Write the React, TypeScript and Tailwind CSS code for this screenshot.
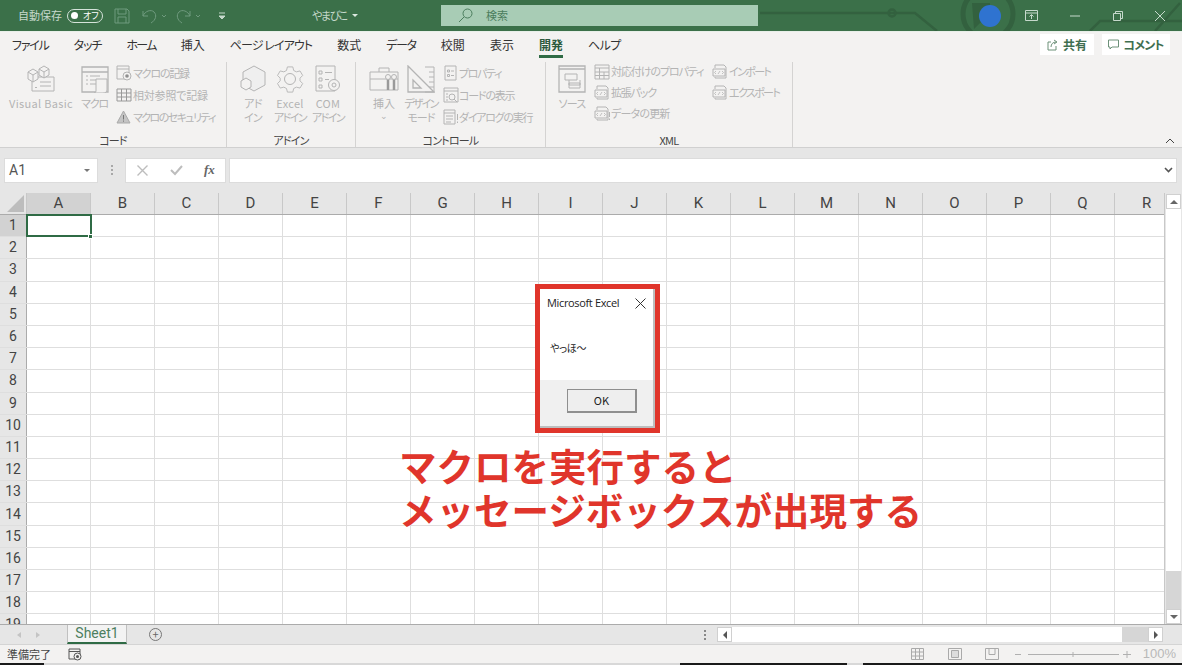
import React from "react";

const C = "#b4b4b4";
const Svg = ({ w, h, children, className = "" }: { w: number; h: number; children: React.ReactNode; className?: string }) => (
  <svg width={w} height={h} viewBox={`0 0 ${w} ${h}`} fill="none" stroke={C} strokeWidth={1} className={`shrink-0 ${className}`}>
    {children}
  </svg>
);

const VBIcon = () => (
  <Svg w={30} h={28}>
    <path d="M6 12h22v14H6z" /><path d="M14 17h11M14 21h11M9 22.5h2" />
    <path d="M2 7l5-3 5 3v7l-5 3-5-3zM2 7l5 3 5-3M7 10v7" fill="#f3f2f1" />
    <path d="M13 4l5-3 5 3v6l-5 3-5-3zM13 4l5 3 5-3M18 7v6" fill="#f3f2f1" />
  </Svg>
);
const MacroIcon = () => (
  <Svg w={28} h={28}>
    <path d="M1 2h26v25H1zM1 7h26" strokeWidth={1.3} />
    <path d="M5 11h2M9 11h10M5 15h2M9 15h10M5 19h2M9 19h6" />
    <path d="M15 14h11v11c0 2-2 3-4 3h-9c2 0 2-2 2-3z" fill="#f3f2f1" />
  </Svg>
);
const RecIcon = () => (
  <Svg w={16} h={16}>
    <path d="M1 1h12v13H1zM1 4h12" /><circle cx={11} cy={11} r={4} fill="#f3f2f1" /><circle cx={11} cy={11} r={1.8} fill="#8f8f8f" stroke="none" />
  </Svg>
);
const TableIcon = () => (
  <Svg w={16} h={14}>
    <path d="M1 1h14v12H1zM1 5h14M1 9h14M5.5 1v12M10.5 1v12" stroke="#999" />
  </Svg>
);
const WarnIcon = () => (
  <Svg w={15} h={14}>
    <path d="M7.5 1L14 13H1z" fill="#c4c4c4" stroke="#aaa" /><path d="M7.5 5v4.5M7.5 10.5v1.2" stroke="#777" />
  </Svg>
);
const HexIcon = () => (
  <Svg w={28} h={30}>
    <path d="M15 2l11 6v13l-11 6-11-6V8z" fill="#efefef" />
    <path d="M2 17l5-3 5 3v6l-5 3-5-3z" fill="#f3f2f1" />
  </Svg>
);
const GearIcon = () => (
  <Svg w={28} h={28}>
    <path d="M11 1h6l1 4 3 1.5 4-1 3 5-3 3v3l3 3-3 5-4-1-3 1.5-1 4h-6l-1-4-3-1.5-4 1-3-5 3-3v-3l-3-3 3-5 4 1L10 5z" transform="translate(1.5 1) scale(.9)" />
    <circle cx={14} cy={14} r={5.5} />
  </Svg>
);
const ComIcon = () => (
  <Svg w={26} h={28}>
    <path d="M1 1h19v25H1z" /><path d="M4 6h3v3H4zM4 13h3v3H4zM4 20h3v3H4zM10 7.5h7M10 14.5h4" />
    <circle cx={19} cy={20} r={5.5} fill="#f3f2f1" /><circle cx={19} cy={20} r={2} />
  </Svg>
);
const ToolboxIcon = () => (
  <Svg w={30} h={26}>
    <path d="M1 6h28v18H1zM1 13h28M10 6V2h10v4" />
    <path d="M19 11v13M25 11v13" stroke="#9a9a9a" strokeWidth={2.5} />
    <circle cx={19} cy={11} r={2.5} fill="#f3f2f1" /><circle cx={25} cy={11} r={2.5} fill="#f3f2f1" />
  </Svg>
);
const RulerIcon = () => (
  <Svg w={28} h={28}>
    <path d="M1 1l26 26H1zM6 15l8 8H6z" strokeWidth={1.3} />
    <path d="M18 2h9v25h-9" /><path d="M22 7h5M22 12h5M22 17h5M22 22h5" />
  </Svg>
);
const PropIcon = () => (
  <Svg w={14} h={16}>
    <path d="M1 1h11v14H1zM3.5 5h2v2h-2zM3.5 9.5h2v2h-2zM7 6h3M7 10.5h3" />
  </Svg>
);
const CodeIcon = () => (
  <Svg w={16} h={16}>
    <path d="M1 1h14v14H1zM1 4h14" /><circle cx={9} cy={10} r={3} /><path d="M11 12l3 3M3 7h2M3 10h2M3 13h2" />
  </Svg>
);
const DlgIcon = () => (
  <Svg w={16} h={16}>
    <path d="M1 1h11v14H1zM1 4h11M3 7h7M3 10h7M3 13h5M14.5 5v6M14.5 12.5V14" />
  </Svg>
);
const SourceIcon = () => (
  <Svg w={28} h={28}>
    <path d="M1 1h26v26H1zM1 4h26" strokeWidth={1.3} /><path d="M7 9h12v6H7zM11 15v5M11 20h11v-5" /><path d="M11 18h11v5H11z" />
  </Svg>
);
const MapIcon = () => (
  <Svg w={16} h={16}>
    <path d="M1 1h14v14H1zM1 4h14M1 8h14M1 11.5h14M5.5 4v11M10 8v7" />
  </Svg>
);
const XmlIcon = ({ mark }: { mark?: boolean }) => (
  <Svg w={16} h={16}>
    <path d="M3 4V1h9l2 2v11H3v-1M1 5h12v7H1z" />
    <path d="M4 7L2.5 8.5 4 10M10 7l1.5 1.5L10 10M8 7L6 10" strokeWidth={0.8} />
    {mark && <path d="M15.5 6v5M15.5 12.5V14" />}
  </Svg>
);

const Big = ({ cls, icon, lines, chevron }: { cls: string; icon: React.ReactNode; lines: [string, string][]; chevron?: boolean }) => (
  <div className={`flex flex-col items-center shrink-0 ${cls}`}>
    <div className="h-[34px] flex items-center justify-center">{icon}</div>
    <div className="text-[11px] leading-[14px] text-[#b4b4b4] text-center whitespace-nowrap">
      {lines.map(([l, t]) => (
        <div key={l} className={t}>{l}</div>
      ))}
      {chevron && <div className="text-[9px] leading-[12px]">⌄</div>}
    </div>
  </div>
);

const Small = ({ icon, text, t, h = "h-[22px]", slot = "w-[17px]" }: { icon: React.ReactNode; text: string; t: string; h?: string; slot?: string }) => (
  <div className={`${h} flex items-center gap-[1px] text-[11px] text-[#b4b4b4] whitespace-nowrap`}>
    <div className={`${slot} flex justify-center`}>{icon}</div>
    <span className={t}>{text}</span>
  </div>
);

const Group = ({ cls, label, children }: { cls: string; label: string; children: React.ReactNode }) => (
  <div className={`flex flex-col shrink-0 h-[85px] border-r border-[#d4d3d2] ${cls}`}>
    <div className="flex-1 flex">{children}</div>
    <div className="text-[11px] leading-[14px] text-[#444] text-center tracking-[-0.8px]">{label}</div>
  </div>
);

const tabs: [string, string][] = [
  ["ファイル", "tracking-[-1.25px]"],
  ["タッチ", "tracking-[-1px]"],
  ["ホーム", "tracking-[-1.7px]"],
  ["挿入", ""],
  ["ページ レイアウト", "tracking-[-0.9px]"],
  ["数式", ""],
  ["データ", "tracking-[-1.3px]"],
  ["校閲", ""],
  ["表示", ""],
  ["開発", ""],
  ["ヘルプ", "tracking-[-0.5px]"],
];
const cols = "ABCDEFGHIJKLMNOPQR".split("");
const rows = Array.from({ length: 19 }, (_, i) => i + 1);

export default function App() {
  return (
    <div className="relative w-[1182px] h-[665px] overflow-hidden flex flex-col bg-white text-[#333] [font-family:'Noto_Sans_CJK_JP','Liberation_Sans',sans-serif] [font-feature-settings:'palt']">
      {/* Title bar */}
      <div className="relative h-[31px] shrink-0 bg-[#3b7049] overflow-hidden flex items-center text-[#c6d9cc]">
        <svg className="absolute left-[760px] top-0" width="422" height="31" fill="none" stroke="#33613f" strokeWidth="2.5">
          <path d="M0 13h130M130 13h25l22 18" />
          <circle cx="132" cy="13" r="3.5" />
          <circle cx="228" cy="14" r="25" strokeWidth="5" />
          <path d="M330 31l10-10h90M395 31l25-28" />
          <path d="M212 3h18v18h-8l-8 8z" fill="#33613f" stroke="none" />
        </svg>
        <span className="relative ml-[18px] w-[44px] text-[11px] whitespace-nowrap">自動保存</span>
        <div className="relative ml-[5px] w-[36px] h-[14px] rounded-full border border-[#d5e3da] flex items-center pl-[3px] gap-[5px]">
          <span className="w-[7px] h-[7px] rounded-full bg-white" />
          <span className="text-[9px] text-white leading-none">オフ</span>
        </div>
        <svg className="relative ml-[11px]" width="16" height="16" fill="none" stroke="#6f9a7e"><path d="M1 1h12l2 2v12H1zM4 1v5h8V1M4 15V9h8v6" /></svg>
        <svg className="relative ml-[11px]" width="30" height="16" fill="none" stroke="#6f9a7e"><path d="M2 3v5h5M2 8c2-5 8-7 11-4s2 8-3 11" /><path d="M21 7l2 2 2-2" /></svg>
        <svg className="relative ml-[4px]" width="30" height="16" fill="none" stroke="#6f9a7e"><path d="M15 3v5h-5M15 8c-2-5-8-7-11-4s-2 8 3 11" /><path d="M21 7l2 2 2-2" /></svg>
        <svg className="relative ml-[13px]" width="8" height="8" fill="none" stroke="#c6d9cc"><path d="M1 1h6" /><path d="M1 4h6L4 7z" fill="#c6d9cc" /></svg>
        <span className="relative ml-[86px] w-[35px] text-[11px] whitespace-nowrap tracking-[-1.4px]">やまびこ</span>
        <span className="relative ml-[5px] w-0 h-0 border-x-[3px] border-x-transparent border-t-[3px] border-t-[#dce8e0]" />
        <div className="relative ml-[83px] w-[317px] h-[21px] bg-[#a8ccb5] flex items-center pl-[17px] gap-[13px] text-[#4b7d5d] text-[11px]">
          <svg width="15" height="15" fill="none" stroke="#4b7d5d"><circle cx="9.5" cy="5.5" r="4.5" /><path d="M6 9l-5 5" /></svg>
          <span>検索</span>
        </div>
        <div className="relative ml-[221px] w-[22px] h-[22px] rounded-full bg-[#2f73d0]" />
        <svg className="relative ml-[24px]" width="13" height="11" fill="none" stroke="#c6d9cc"><path d="M.5.5h12v10H.5zM.5 3h12M6.5 9V5M4.5 6.5l2-2 2 2" /></svg>
        <svg className="relative ml-[32px]" width="10" height="2" fill="none" stroke="#c6d9cc"><path d="M0 1h10" /></svg>
        <svg className="relative ml-[33px]" width="10" height="10" fill="none" stroke="#c6d9cc"><path d="M.5 2.5h7v7h-7zM2.5 2.5v-2h7v7h-2" /></svg>
        <svg className="relative ml-[32px]" width="10" height="10" fill="none" stroke="#c6d9cc"><path d="M0 0l10 10M10 0L0 10" /></svg>
      </div>
      <div className="h-[1px] shrink-0 bg-[#e8efe9]" />

      {/* Tabs */}
      <div className="h-[26px] shrink-0 bg-[#f3f2f1] flex items-center pl-[12px] gap-[25px] text-[12px] text-[#333]">
        {tabs.map(([t, tr]) => (
          <div key={t} className={`relative h-full flex items-center whitespace-nowrap ${tr} ${t === "開発" ? "font-bold text-[#2d5a3d]" : ""}`}>
            {t}
            {t === "開発" && <span className="absolute left-0 right-0 bottom-0 h-[3px] bg-[#2f6b45]" />}
          </div>
        ))}
        <div className="flex-1" />
        <div className="flex gap-[8px] pr-[12px] -mt-[1px]">
          <div className="h-[21px] w-[54px] bg-white flex items-center justify-center gap-[4px] font-bold text-[#3f6f50] text-[12px]">
            <svg width="12" height="12" fill="none" stroke="#6d9179"><path d="M4 3H1v8h8V7M4 8c0-3 2-5 5-5M7 1l3 2-3 2" /></svg>共有
          </div>
          <div className="h-[21px] w-[68px] bg-white flex items-center justify-center gap-[4px] font-bold text-[#3f6f50] text-[12px] tracking-[-0.8px]">
            <svg width="11" height="12" fill="none" stroke="#6d9179"><path d="M.5 1h10v7H4l-2 2V8H.5z" /></svg>コメント
          </div>
        </div>
      </div>

      {/* Ribbon */}
      <div className="relative h-[90px] shrink-0 bg-[#f3f2f1] flex pt-[4px] border-b border-[#d0d0d0]">
        <Group cls="w-[227px]" label="コード">
          <Big cls="w-[64px] ml-[9px]" icon={<VBIcon />} lines={[["Visual Basic", "tracking-[0.3px]"]]} />
          <Big cls="w-[27px] ml-[8px]" icon={<MacroIcon />} lines={[["マクロ", "tracking-[-1.2px]"]]} />
          <div className="ml-[7px]">
            <Small icon={<RecIcon />} text="マクロの記録" t="tracking-[-1.2px]" />
            <Small icon={<TableIcon />} text="相対参照で記録" t="tracking-[-0.2px]" />
            <Small icon={<WarnIcon />} text="マクロのセキュリティ" t="tracking-[-1.6px]" />
          </div>
        </Group>
        <Group cls="w-[129px]" label="アドイン">
          <Big cls="w-[28px] ml-[12px]" icon={<HexIcon />} lines={[["アド", "tracking-[-0.6px]"], ["イン", "tracking-[-0.6px]"]]} />
          <Big cls="w-[34px] ml-[6px]" icon={<GearIcon />} lines={[["Excel", "tracking-[0.3px]"], ["アドイン", "tracking-[-1.5px]"]]} />
          <Big cls="w-[36px] ml-[3px]" icon={<ComIcon />} lines={[["COM", "tracking-[0.3px]"], ["アドイン", "tracking-[-1.5px]"]]} />
        </Group>
        <Group cls="w-[190px]" label="コントロール">
          <Big cls="w-[30px] ml-[13px]" icon={<ToolboxIcon />} lines={[["挿入", ""]]} chevron />
          <Big cls="w-[36px] ml-[4px]" icon={<RulerIcon />} lines={[["デザイン", "tracking-[-1.7px]"], ["モード", "tracking-[-1px]"]]} />
          <div className="ml-[4px]">
            <Small slot="w-[15px]" icon={<PropIcon />} text="プロパティ" t="tracking-[-1.4px]" />
            <Small slot="w-[15px]" icon={<CodeIcon />} text="コードの表示" t="tracking-[-1.2px]" />
            <Small slot="w-[15px]" icon={<DlgIcon />} text="ダイアログの実行" t="tracking-[-1.25px]" />
          </div>
        </Group>
        <Group cls="w-[247px]" label="XML">
          <Big cls="w-[28px] ml-[12px]" icon={<SourceIcon />} lines={[["ソース", "tracking-[-0.8px]"]]} />
          <div className="w-[112px] ml-[7px] -mt-[1px]">
            <Small h="h-[21px]" icon={<MapIcon />} text="対応付けのプロパティ" t="tracking-[-1.1px]" />
            <Small h="h-[21px]" icon={<XmlIcon />} text="拡張パック" t="tracking-[-1.2px]" />
            <Small h="h-[21px]" icon={<XmlIcon mark />} text="データの更新" t="tracking-[-0.8px]" />
          </div>
          <div className="ml-[6px] -mt-[1px]">
            <Small h="h-[21px]" icon={<XmlIcon />} text="インポート" t="tracking-[-1.6px]" />
            <Small h="h-[21px]" icon={<XmlIcon />} text="エクスポート" t="tracking-[-1.6px]" />
          </div>
        </Group>
        <svg className="absolute right-[7px] bottom-[3px]" width="10" height="6" fill="none" stroke="#444"><path d="M1 5l4-4 4 4" /></svg>
      </div>

      {/* Formula bar */}
      <div className="h-[45px] shrink-0 bg-[#e6e6e6] flex items-center pl-[4px] pr-[5px] pb-[1px]">
        <div className="w-[94px] h-[25px] bg-white border border-[#dcdcdc] flex items-center justify-between px-[4px] text-[14px] text-[#555] [font-family:'Roboto',sans-serif]">
          A1
          <span className="w-0 h-0 mr-[3px] border-x-[3px] border-x-transparent border-t-[3px] border-t-[#777]" />
        </div>
        <div className="w-[27px] flex flex-col items-center gap-[2px]">
          <span className="w-[2px] h-[2px] bg-[#a8a8a8]" /><span className="w-[2px] h-[2px] bg-[#a8a8a8]" /><span className="w-[2px] h-[2px] bg-[#a8a8a8]" />
        </div>
        <div className="w-[101px] h-[25px] bg-white border border-[#dcdcdc] flex items-center pl-[11px]">
          <svg width="11" height="11" fill="none" stroke="#bdbdbd" strokeWidth="1.4"><path d="M.5.5l10 10M10.5.5l-10 10" /></svg>
          <svg className="ml-[22px]" width="13" height="11" fill="none" stroke="#bdbdbd" strokeWidth="2"><path d="M1 5l4 4 7-8" /></svg>
          <span className="ml-[21px] text-[13px] italic font-bold text-[#666] [font-family:'Liberation_Serif',serif]">fx</span>
        </div>
        <div className="ml-[3px] flex-1 h-[25px] bg-white border border-[#dcdcdc] flex items-center justify-end pr-[3px]">
          <svg width="9" height="6" fill="none" stroke="#555" strokeWidth="1.6"><path d="M1 1l3.5 3.5L8 1" /></svg>
        </div>
      </div>

      {/* Sheet */}
      <div className="relative flex-1 min-h-0 flex">
        <div className="flex-1 min-w-0 overflow-hidden [font-family:'Roboto',sans-serif]">
          <div className="flex h-[22px] bg-[#e6e6e6] border-b border-[#ababab] text-[15px] text-[#444]">
            <div className="w-[27px] shrink-0 relative border-r border-[#c8c8c8]">
              <span className="absolute right-[2px] bottom-[2px] w-0 h-0 border-l-[17px] border-l-transparent border-b-[17px] border-b-[#bdbdbd]" />
            </div>
            {cols.map((c) => (
              <div key={c} className={`w-[64px] shrink-0 flex items-center justify-center border-r border-[#c8c8c8] ${c === "A" ? "bg-[#d2d2d2]" : ""}`}>
                {c}
              </div>
            ))}
          </div>
          {rows.map((r) => (
            <div key={r} className="flex h-[22.2px] border-b border-[#dedede]">
              <div className={`w-[27px] shrink-0 flex items-center justify-center border-r border-[#ababab] text-[14px] text-[#444] ${r === 1 ? "bg-[#d2d2d2]" : "bg-[#e6e6e6]"}`}>
                {r}
              </div>
              {cols.map((c) => (
                <div key={c} className={`relative w-[64px] shrink-0 border-r border-[#dedede] ${r === 1 && c === "A" ? "outline-2 -outline-offset-1 outline-[#2f6b45] z-10" : ""}`}>
                  {r === 1 && c === "A" && <span className="absolute right-[-3px] bottom-[-3px] w-[5px] h-[5px] bg-[#2f6b45] border border-white" />}
                </div>
              ))}
            </div>
          ))}
        </div>
        {/* Vertical scrollbar */}
        <div className="w-[18px] shrink-0 bg-[#e6e6e6] flex flex-col items-center pt-[1px] border-l border-[#c8c8c8]">
          <div className="w-[15px] h-[15px] bg-white border border-[#d0d0d0] flex items-center justify-center">
            <span className="w-0 h-0 border-x-[4px] border-x-transparent border-b-[4px] border-b-[#666]" />
          </div>
          <div className="w-[15px] h-[362px] bg-white" />
          <div className="w-[15px] flex-1 bg-[#d6d6d6]" />
          <div className="w-[15px] h-[15px] bg-white border border-[#d0d0d0] flex items-center justify-center">
            <span className="w-0 h-0 border-x-[4px] border-x-transparent border-t-[4px] border-t-[#666]" />
          </div>
        </div>
      </div>

      {/* Sheet tabs */}
      <div className="relative h-[20px] shrink-0 bg-[#e6e6e6] border-t border-[#ababab] flex items-center pr-[19px]">
        <span className="ml-[17px] w-0 h-0 border-y-[3px] border-y-transparent border-r-[4px] border-r-[#c4c4c4]" />
        <span className="ml-[15px] w-0 h-0 border-y-[3px] border-y-transparent border-l-[4px] border-l-[#c4c4c4]" />
        <div className="ml-[27px] w-[60px] h-[19px] -mt-[1px] bg-[#f3f3f3] border-x border-[#c0c0c0] border-b-2 border-b-[#2f6b45] flex items-center justify-center text-[14px] text-[#4d7f5f] [font-family:'Roboto',sans-serif]">
          Sheet1
        </div>
        <div className="ml-[22px] w-[13px] h-[13px] rounded-full border border-[#777] flex items-center justify-center text-[11px] leading-none text-[#666]">+</div>
        <div className="flex-1" />
        <div className="flex flex-col gap-[2px] mr-[11px]">
          <span className="w-[2px] h-[2px] bg-[#888]" /><span className="w-[2px] h-[2px] bg-[#888]" /><span className="w-[2px] h-[2px] bg-[#888]" />
        </div>
        <div className="w-[15px] h-[15px] bg-white border border-[#d0d0d0] flex items-center justify-center">
          <span className="w-0 h-0 border-y-[4px] border-y-transparent border-r-[4px] border-r-[#555]" />
        </div>
        <div className="w-[390px] h-[15px] bg-white" />
        <div className="w-[26px] h-[15px] bg-[#d6d6d6]" />
        <div className="w-[15px] h-[15px] bg-white border border-[#d0d0d0] flex items-center justify-center">
          <span className="w-0 h-0 border-y-[4px] border-y-transparent border-l-[4px] border-l-[#555]" />
        </div>
      </div>

      {/* Status bar */}
      <div className="h-[19px] shrink-0 bg-[#f3f2f1] border-t border-[#d4d4d4] flex items-center text-[11px] text-[#444]">
        <span className="ml-[7px] w-[44px] whitespace-nowrap">準備完了</span>
        <svg className="ml-[17px]" width="14" height="13" fill="none" stroke="#555"><path d="M1 1h11v10H1zM1 3.5h11" /><circle cx="9.5" cy="8.5" r="3.5" fill="#f3f2f1" /><circle cx="9.5" cy="8.5" r="1.5" fill="#555" stroke="none" /></svg>
        <div className="flex-1" />
        <svg width="13" height="12" fill="none" stroke="#aaa"><path d="M.5.5h12v11H.5zM.5 4h12M.5 8h12M4.5.5v11M8.5.5v11" /></svg>
        <svg className="ml-[24px]" width="14" height="12" fill="none" stroke="#aaa"><path d="M.5.5h13v11H.5z" /><path d="M3.5 2.5h7v7h-7z" fill="#ddd" /></svg>
        <svg className="ml-[23px]" width="14" height="12" fill="none" stroke="#aaa"><path d="M.5.5h13v11H.5zM4 .5v6h6v-6" /></svg>
        <svg className="ml-[16px]" width="116" height="9" fill="none" stroke="#b0b0b0"><path d="M0 4.5h6M13 4.5h91M58 2v5M108 4.5h8M112 1v7" /></svg>
        <span className="ml-[12px] mr-[6px] text-[13px] text-[#b8b8b8] [font-family:'Liberation_Sans',sans-serif]">100%</span>
      </div>
      <div className="h-[2px] shrink-0 bg-[#d8d8d8] flex">
        <div className="w-[44px] bg-[#1a1a1a]" />
        <div className="ml-[636px] w-[167px] bg-[#1a1a1a]" />
        <div className="ml-[16px] flex-1 bg-[#1a1a1a]" />
      </div>

      {/* Message box overlay */}
      <div className="absolute left-[535px] top-[284px] w-[125px] h-[149px] border-[5px] border-[#e0352b] bg-white flex flex-col shadow-[inset_-2px_-2px_0_#bdbdbd]">
        <div className="h-[29px] flex items-center justify-between pl-[7px] pr-[9px] text-[11px] text-[#222] [font-family:'Open_Sans','Liberation_Sans',sans-serif]">
          <span className="whitespace-nowrap tracking-[-0.35px]">Microsoft Excel</span>
          <svg width="11" height="11" fill="none" stroke="#333"><path d="M.5.5l10 10M10.5.5l-10 10" /></svg>
        </div>
        <div className="h-[62px] pl-[10px] pt-[22px] text-[10px] leading-[16px] text-[#222] tracking-[-0.3px]">やっほ～</div>
        <div className="flex-1 bg-[#f0f0f0] flex items-start justify-end pr-[16px] pt-[9px] mr-[2px] mb-[2px]">
          <div className="w-[70px] h-[24px] bg-[#eeeeee] border border-[#8f8f8f] border-b-2 border-r-2 flex items-center justify-center text-[11px] text-[#222]">OK</div>
        </div>
      </div>

      {/* Annotation */}
      <div className="absolute left-[399px] top-[443px] text-[37.5px] leading-[44px] font-bold text-[#e0352b] whitespace-nowrap [font-feature-settings:normal]">
        <div>マクロを実行すると</div>
        <div>メッセージボックスが出現する</div>
      </div>
    </div>
  );
}
